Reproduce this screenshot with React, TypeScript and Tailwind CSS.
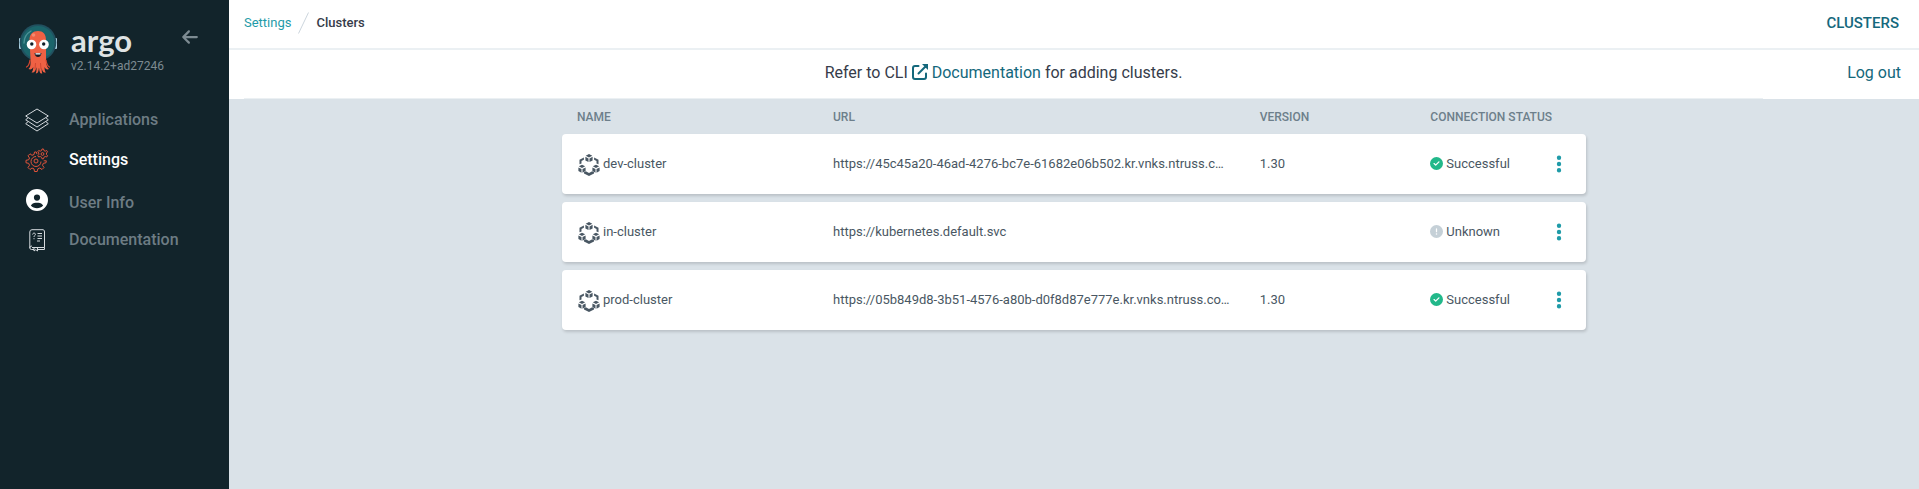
import { FaArrowLeft, FaCircleCheck, FaCircleExclamation, FaCircleUser, FaEllipsisVertical } from 'react-icons/fa6'

const clusters = [
  { name: 'dev-cluster', url: 'https://45c45a20-46ad-4276-bc7e-61682e06b502.kr.vnks.ntruss.com', version: '1.30', status: 'Successful' },
  { name: 'in-cluster', url: 'https://kubernetes.default.svc', version: '', status: 'Unknown' },
  { name: 'prod-cluster', url: 'https://05b849d8-3b51-4576-a80b-d0f8d87e777e.kr.vnks.ntruss.com', version: '1.30', status: 'Successful' },
]

function ArgoLogo() {
  return (
    <svg width="38" height="50" viewBox="0 0 38 50" aria-hidden="true">
      <rect x="0" y="14" width="3" height="11" rx="1" fill="#a9cfe0" />
      <rect x="35" y="14" width="3" height="11" rx="1" fill="#a9cfe0" />
      <circle cx="19" cy="18.5" r="18.3" fill="#21505f" />
      <circle cx="19" cy="18.5" r="16.5" fill="#1b656b" />
      <path d="M5 19a14 14 0 0 1 7-12" fill="none" stroke="#4d9297" strokeWidth="1.4" strokeLinecap="round" />
      <path
        d="M10.500 16C10.500 10 14 7 19 7s8 3 8 9v19c0 4 .5 8 3 10-2 1-3.500 0-4.500-2 0 3 .5 4.500 1.500 5.500-3 .5-4-2-4.300-5 0 3 0 4.500.6 6-2.600.8-3-3-3.300-6-.4 3-.7 6-3.200 6 .7-2 .8-4 .6-6.300-.7 3-1.800 5.800-4.900 5.300 1.200-1.200 1.700-2.700 1.800-5.500-1 2-2.500 3-4.800 2 2.500-2 2-6 2-10z"
        fill="#ef6144"
      />
      <path d="M11 36c-.5 4-1.500 6-3.500 7M27 36c.5 4 1.500 6 3.500 7" fill="none" stroke="#d9472f" strokeWidth="1.200" strokeLinecap="round" />
      <path d="M16.500 39l-.5 6M21.500 39l.5 6" stroke="#c93f2c" strokeWidth=".8" />
      <circle cx="14.500" cy="11" r="1.800" fill="#f58a70" />
      <circle cx="12.500" cy="20.500" r="4.800" fill="#fff" />
      <circle cx="25" cy="20.500" r="4.800" fill="#fff" />
      <circle cx="12.800" cy="20" r="1.700" fill="#111f27" />
      <circle cx="24.700" cy="20" r="1.700" fill="#111f27" />
      <path d="M15.500 29h7c-.3 2.700-1.600 4-3.500 4s-3.200-1.300-3.500-4z" fill="#1a1a22" />
      <path d="M16.500 29.200h5v1.300h-5z" fill="#fff" />
    </svg>
  )
}

function LayersIcon() {
  return (
    <svg width="24" height="24" viewBox="0 0 24 24" fill="none" stroke="#d5dade" strokeLinejoin="round" aria-hidden="true">
      <path d="M12 1l11.300 7L12 15 .7 8z" />
      <path d="M3 9.800L.7 11.800 12 19l11.300-7.200L21 9.800" />
      <path d="M3 13.700L.7 15.700 12 23l11.300-7.300L21 13.700" />
    </svg>
  )
}

function GearsIcon() {
  return (
    <svg width="24" height="24" viewBox="0 0 24 24" fill="none" stroke="#e0533a" strokeLinejoin="round" aria-hidden="true">
      <circle cx="11" cy="13" r="2" />
      <path d="M12 6.200l-.7-2.200H9.500L9 6.500l-2 .8-2-1.500-2 2 1.500 2.200-.8 1.800-2.700.5v2.500l2.700.5.8 2L3 19.500l2 2L7 20l2 .9.500 2.600h2.700l.6-2.600 2-.9 2.200 1.500 2-2-1.500-2.200.8-2 2.700-.5.300-2h-2.600" />
      <path d="M11 8.500a5 5 0 1 0 5 5" />
      <circle cx="17.500" cy="6" r="1.400" />
      <path d="M17 1l-.4 1.500-1.400.7-1.500-.7-.9 1.300 1 1.200v1.500l-1 1.200.9 1.300 1.500-.5 1.400.8.4 1.500h1.500l.4-1.500 1.300-.8 1.500.5.8-1.300-1-1.200V5l1-1.200-.8-1.300-1.500.7-1.300-.7L18.500 1z" />
    </svg>
  )
}

function BookIcon() {
  return (
    <svg width="24" height="24" viewBox="0 0 24 24" fill="none" stroke="#d5dade" strokeLinejoin="round" aria-hidden="true">
      <path d="M7 19.500h12.500V4A2 2 0 0 0 18 1.700H7A2.300 2.300 0 0 0 4.800 4v16A1.700 1.700 0 0 0 6.500 21.500H9" />
      <path d="M4.800 20A2 2 0 0 1 7 18M13 21.500h6.500v-2" />
      <path d="M9 19.500V23l1.800-1.300 1.700 1.300v-3.500" />
      <path d="M7.600 6.500c.2-2 3-1.700 2.800 0C10.300 7.600 9 7.500 9 9M9 10.200v1" />
      <path d="M12.500 5.500h4.500M12.500 8h4.500M12.500 10.500h4.500M12 13h3" />
    </svg>
  )
}

// three cubes joined in a ring
function ClusterIcon() {
  return (
    <svg className="mt-0.5" width="22" height="22" viewBox="0 0 22 22" fill="#495763" aria-hidden="true">
      <path d="M11 0l3.300 1.700L11 3.400 7.700 1.700zM7.400 2.800l3.100 1.600v3.700L7.400 6.500zM14.600 2.800v3.700l-3.100 1.600V4.400z" />
      <path d="M4 10.700l3.200 1.600L4 13.900.8 12.300zM.4 13.400l3.100 1.600v3.700L.4 17.100zM7.600 13.400v3.700l-3.100 1.600V15z" />
      <path d="M18 10.700l3.200 1.600-3.200 1.600-3.200-1.600zM14.400 13.400l3.100 1.600v3.700l-3.100-1.600zM21.600 13.400v3.700l-3.100 1.600V15z" />
      <path d="M1.500 10.300V5.800l4.400-2.300v2.300L3.500 7.100v2.300zM20.500 10.300V5.800l-4.400-2.300v2.300l2.400 1.300v2.300z" />
      <path d="M6 18.300l1.800-1.100L11 19l3.200-1.800 1.800 1.100v1.200L11 22l-5-2.500z" />
    </svg>
  )
}

function ExternalIcon() {
  return (
    <svg className="inline-block align-[-2px]" width="16" height="16" viewBox="0 0 16 16" fill="none" stroke="currentColor" strokeWidth="2" aria-hidden="true">
      <path d="M6.500 2H3a2 2 0 0 0-2 2v9a2 2 0 0 0 2 2h9a2 2 0 0 0 2-2V9.500" strokeLinecap="round" />
      <path d="M6.500 9.500L13.500 2.500" strokeLinecap="round" />
      <path d="M10 0h6v6z" fill="currentColor" stroke="none" />
    </svg>
  )
}

const nav = [
  { label: 'Applications', icon: <LayersIcon />, style: 'h-10 text-[#6d7c84]' },
  { label: 'Settings', icon: <GearsIcon />, style: 'h-10 text-white' },
  { label: 'User Info', icon: <FaCircleUser className="mb-1.5 size-[22px] text-white" />, style: 'h-11 pt-0.5 text-[#6d7c84]' },
  { label: 'Documentation', icon: <BookIcon />, style: 'h-8 text-[#6d7c84]' },
]

export default function App() {
  return (
    <div className="flex min-h-screen bg-[#dae2e8] font-[Roboto,sans-serif] text-[#363c4a]">
      {/* sidebar */}
      <aside className="w-[229px] shrink-0 bg-[#12242b]">
        <div className="flex pt-6 pl-[19px]">
          <ArgoLogo />
          <div className="ml-3.5 w-[110px]">
            <div className="font-[Lato,sans-serif] text-[31px] leading-8 font-bold text-[#dfe3e4]">argo</div>
            <div className="text-xs leading-5 text-[#7d8b92]">v2.14.2+ad27246</div>
          </div>
          <button className="h-[26px] text-[#7d8b92]" aria-label="Collapse sidebar">
            <FaArrowLeft className="size-[18px]" />
          </button>
        </div>
        <nav className="mt-6">
          {nav.map((item) => (
            <a key={item.label} href="#" className={`flex items-center gap-5 pl-[25px] text-base font-medium ${item.style}`}>
              <span className="flex w-6 justify-center">{item.icon}</span>
              {item.label}
            </a>
          ))}
        </nav>
      </aside>

      <main className="min-w-0 flex-1">
        {/* breadcrumb bar */}
        <header className="flex h-[50px] items-center justify-between border-b-2 border-[#ebf0f3] bg-white pr-5 pb-0.5 pl-[15px]">
          <div className="flex items-center gap-[7px] text-[13px]">
            <a href="#" className="text-[#1f9ba8]">Settings</a>
            <svg width="11" height="22" viewBox="0 0 11 22" stroke="#ccd6dd" aria-hidden="true">
              <path d="M.5 21.500L10.500.5" />
            </svg>
            <span className="font-medium">Clusters</span>
          </div>
          <h1 className="text-[15px] font-medium text-[#14687c]">CLUSTERS</h1>
        </header>

        <div className="flex h-[49px] items-stretch bg-white pl-[15px]">
          <p className="flex-1 border-b border-[#ebf0f3] text-center leading-[46px]">
            Refer to CLI{' '}
            <a href="#" className="text-[#14687c]">
              <ExternalIcon /> Documentation
            </a>{' '}
            for adding clusters.
          </p>
          <div className="w-[156px] pr-[18px] text-right leading-[46px]">
            <button className="text-[#14687c]">Log out</button>
          </div>
        </div>

        {/* clusters */}
        <table className="mx-auto mt-px w-full max-w-[1024px] table-fixed border-separate border-spacing-x-0 border-spacing-y-2 text-left text-[13px] text-[#495763]">
          <thead>
            <tr className="h-[18px] text-xs text-[#6d7f8b]">
              <th className="w-3/12 pl-[15px] font-medium">NAME</th>
              <th className="w-5/12 pl-[15px] font-medium">URL</th>
              <th className="w-2/12 pl-[15px] font-medium">VERSION</th>
              <th className="w-2/12 pl-[15px] font-medium">CONNECTION STATUS</th>
            </tr>
          </thead>
          <tbody>
            {clusters.map((c) => (
              <tr key={c.name} className="h-[60px] rounded bg-white shadow-[1px_2px_3px_rgba(0,0,0,0.15)]">
                <td className="rounded-l pl-[15px]">
                  <div className="flex items-center gap-[3px] pl-px">
                    <ClusterIcon />
                    {c.name}
                  </div>
                </td>
                <td className="truncate px-[15px]">{c.url}</td>
                <td className="pl-[15px]">{c.version}</td>
                <td className="rounded-r pr-[19px] pl-[15px]">
                  <div className="flex items-center justify-between">
                    <span className="flex items-center gap-[3px]">
                      {c.status === 'Successful' ? (
                        <FaCircleCheck className="mb-px text-[#22b88a]" />
                      ) : (
                        <FaCircleExclamation className="mb-px text-[#c5d0d7]" />
                      )}
                      {c.status}
                    </span>
                    <button className="flex w-4 justify-center text-xl text-[#1f9ba8]" aria-label="Actions">
                      <FaEllipsisVertical />
                    </button>
                  </div>
                </td>
              </tr>
            ))}
          </tbody>
        </table>
      </main>
    </div>
  )
}
